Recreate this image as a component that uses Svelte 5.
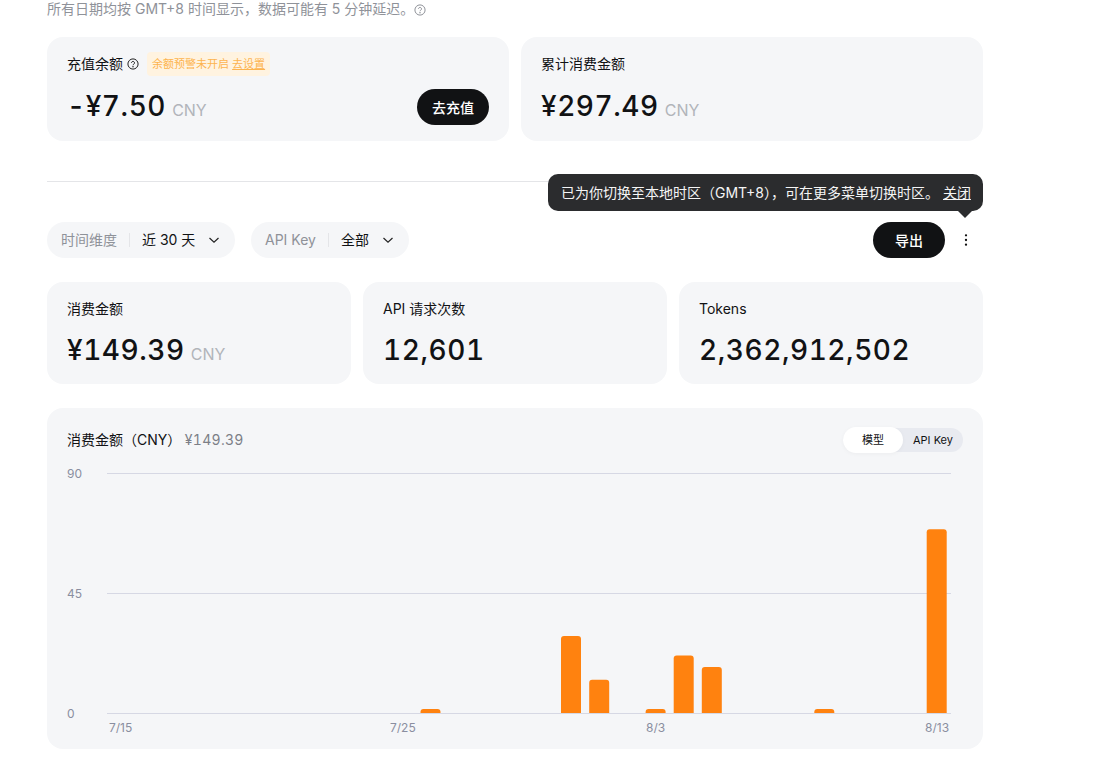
<script>
  const stats = [
    { label: '消费金额', value: '¥149.39', unit: 'CNY' },
    { label: 'API 请求次数', value: '12,601' },
    { label: 'Tokens', value: '2,362,912,502' }
  ];

  // svg origin is at the chart body's top left corner
  const ticks = [
    { label: '90', y: 10 },
    { label: '45', y: 130 },
    { label: '0', y: 250 }
  ];
  const dates = [
    { label: '7/15', x: 42 },
    { label: '7/25', x: 323 },
    { label: '8/3', x: 579 },
    { label: '8/13', x: 858 }
  ];
  const bars = [
    { x: 353.5, top: 246 },
    { x: 494, top: 173 },
    { x: 522.2, top: 216.7 },
    { x: 578.6, top: 246 },
    { x: 606.7, top: 192.5 },
    { x: 634.8, top: 204 },
    { x: 747.3, top: 246 },
    { x: 859.7, top: 66.3 }
  ];

  function barPath(x, top) {
    const r = 3;
    const bottom = 250;
    const h = Math.min(r, bottom - top);
    return `M${x} ${bottom}V${top + h}Q${x} ${top} ${x + r} ${top}H${x + 17}Q${x + 20} ${top} ${x + 20} ${top + h}V${bottom}Z`;
  }
</script>

<div class="page">
  <p class="note">
    所有日期均按 GMT+8 时间显示，数据可能有 5 分钟延迟。<svg class="help" viewBox="0 0 12 12" fill="none" stroke="currentColor">
      <circle cx="6" cy="6" r="5.1" />
      <path d="M4.5 4.9a1.5 1.5 0 1 1 2.3 1.25c-.5.3-.8.6-.8 1.1" />
      <circle cx="6" cy="8.8" r=".35" />
    </svg>
  </p>

  <div class="balance-row">
    <div class="card balance">
      <div class="label-row">
        <span class="label">充值余额</span>
        <svg class="help dark" viewBox="0 0 12 12" fill="none" stroke="currentColor">
          <circle cx="6" cy="6" r="5.1" />
          <path d="M4.5 4.9a1.5 1.5 0 1 1 2.3 1.25c-.5.3-.8.6-.8 1.1" />
          <circle cx="6" cy="8.8" r=".35" />
        </svg>
        <span class="chip">余额预警未开启 <u>去设置</u></span>
      </div>
      <div class="value-row">
        <div class="amount">-¥7.50 <span class="unit">CNY</span></div>
        <button class="pill-btn">去充值</button>
      </div>
    </div>
    <div class="card balance">
      <div class="label-row">
        <span class="label">累计消费金额</span>
      </div>
      <div class="value-row">
        <div class="amount">¥297.49 <span class="unit">CNY</span></div>
      </div>
    </div>
  </div>

  <hr class="divider" />

  <div class="toolbar">
    <div class="filter time">
      <span class="filter-label">时间维度</span>
      <span class="filter-value">近 30 天</span>
      <svg class="chevron" viewBox="0 0 12 12" fill="none" stroke="currentColor" stroke-width="1.2">
        <path d="M1.5 4l4.5 4.2L10.500 4" />
      </svg>
    </div>
    <div class="filter key">
      <span class="filter-label">API Key</span>
      <span class="filter-value">全部</span>
      <svg class="chevron" viewBox="0 0 12 12" fill="none" stroke="currentColor" stroke-width="1.2">
        <path d="M1.5 4l4.5 4.2L10.500 4" />
      </svg>
    </div>
    <div class="actions">
      <button class="pill-btn">导出</button>
      <button class="more" aria-label="更多">
        <svg viewBox="0 0 4 14" fill="#111">
          <circle cx="2" cy="2.300" r="1.150" />
          <circle cx="2" cy="7" r="1.150" />
          <circle cx="2" cy="11.700" r="1.150" />
        </svg>
      </button>
      <div class="tooltip">
        已为你切换至本地时区（GMT+8），可在更多菜单切换时区。 <u>关闭</u>
      </div>
    </div>
  </div>

  <div class="stats">
    {#each stats as stat}
      <div class="card stat">
        <div class="label">{stat.label}</div>
        <div class="amount">
          {stat.value}
          {#if stat.unit}<span class="unit">{stat.unit}</span>{/if}
        </div>
      </div>
    {/each}
  </div>

  <div class="card chart">
    <div class="chart-head">
      <div class="chart-title">
        <span class="label">消费金额（CNY）</span>
        <span class="total">¥149.39</span>
      </div>
      <div class="toggle">
        <span class="toggle-item active">模型</span>
        <span class="toggle-item">API Key</span>
      </div>
    </div>
    <svg class="plot" viewBox="0 0 896 270" width="896" height="270">
      {#each ticks as tick}
        <line x1="40" x2="884" y1={tick.y + 0.5} y2={tick.y + 0.5} stroke="#d6d8e4" />
        <text x="0" y={tick.y + 4.500} class="axis">{tick.label}</text>
      {/each}
      {#each bars as bar}
        <path d={barPath(bar.x, bar.top)} fill="#ff820f" />
      {/each}
      {#each dates as date}
        <text x={date.x} y="268.500" class="axis">{date.label}</text>
      {/each}
    </svg>
  </div>
</div>

<style>
  :global(body) {
    margin: 0;
    background: #fff;
  }

  .page {
    box-sizing: border-box;
    width: 1112px;
    height: 766px;
    overflow: hidden;
    padding: 0 129px 0 47px;
    font-family: Inter, "Noto Sans CJK SC", sans-serif;
    color: #111214;
  }

  .note {
    margin: 0 0 19px;
    height: 18px;
    line-height: 18px;
    font-size: 14px;
    color: #8f9299;
    white-space: nowrap;
  }

  .help {
    width: 12px;
    height: 12px;
    vertical-align: -1.5px;
  }

  .card {
    background: #f5f6f8;
    border-radius: 16px;
    box-sizing: border-box;
  }

  .balance-row {
    display: grid;
    grid-template-columns: 1fr 1fr;
    gap: 12px;
  }

  .balance {
    height: 104px;
    padding: 15px 20px;
  }

  .label-row {
    display: flex;
    align-items: center;
    height: 24px;
  }

  .label {
    font-size: 14px;
    line-height: 20px;
  }

  .help.dark {
    margin-left: 4px;
    color: #222;
  }

  .chip {
    margin-left: 8px;
    padding: 0 5px;
    height: 24px;
    line-height: 24px;
    border-radius: 4px;
    background: #fff3e0;
    color: #fdb44f;
    font-size: 11px;
    white-space: nowrap;
  }

  .value-row {
    display: flex;
    justify-content: space-between;
    align-items: center;
    margin-top: 13px;
    height: 36px;
  }

  .amount {
    font-size: 28px;
    line-height: 36px;
    font-weight: 500;
    font-variant-numeric: tabular-nums;
    letter-spacing: 0.02em;
    white-space: nowrap;
  }

  .value-row .amount {
    padding-top: 1px;
  }

  .unit {
    margin-left: -2px;
    font-size: 16px;
    font-weight: 400;
    letter-spacing: 0;
    color: #b1b4ba;
  }

  .pill-btn {
    width: 72px;
    height: 36px;
    border: none;
    border-radius: 18px;
    background: #111214;
    color: #fff;
    font: 500 14px Inter, "Noto Sans CJK SC", sans-serif;
  }

  .divider {
    margin: 40px 0;
    border: none;
    border-top: 1px solid #e4e5e8;
  }

  .toolbar {
    display: flex;
    align-items: center;
    gap: 16px;
    height: 36px;
  }

  .filter {
    display: flex;
    align-items: center;
    box-sizing: border-box;
    height: 36px;
    padding: 0 15px 0 14px;
    background: #f5f6f8;
    border-radius: 18px;
    font-size: 14px;
    white-space: nowrap;
  }

  .filter.time {
    width: 188px;
  }

  .filter.key {
    width: 158px;
  }

  .filter-label {
    color: #8f9299;
    padding-right: 12px;
    border-right: 1px solid #e4e5e8;
    line-height: 14px;
  }

  .filter-value {
    margin-left: 12px;
    padding-bottom: 2px;
  }

  .chevron {
    width: 12px;
    height: 12px;
    margin-left: auto;
    color: #222;
  }

  .actions {
    position: relative;
    margin-left: auto;
    display: flex;
    align-items: center;
    gap: 18px;
  }

  .more {
    width: 6px;
    height: 14px;
    padding: 0 1px;
    margin-right: 14px;
    border: none;
    background: none;
    display: block;
  }

  .more svg {
    display: block;
    width: 4px;
    height: 14px;
  }

  .tooltip {
    position: absolute;
    right: 0;
    bottom: 47px;
    height: 37px;
    line-height: 37px;
    padding: 0 13px;
    box-sizing: border-box;
    width: 435px;
    background: #2b2c2e;
    color: #f5f5f5;
    font-size: 14px;
    border-radius: 10px;
    white-space: nowrap;
  }

  .tooltip::after {
    content: '';
    position: absolute;
    right: 10px;
    bottom: -7px;
    width: 0;
    height: 0;
    border-left: 8px solid transparent;
    border-right: 8px solid transparent;
    border-top: 8px solid #2b2c2e;
  }

  .stats {
    display: grid;
    grid-template-columns: repeat(3, 1fr);
    gap: 12px;
    margin-top: 24px;
  }

  .stat {
    height: 102px;
    padding: 17px 20px;
  }

  .stat .amount {
    margin-top: 13px;
  }

  .chart {
    margin-top: 24px;
    height: 341px;
    padding: 20px;
  }

  .chart-head {
    display: flex;
    justify-content: space-between;
    align-items: center;
    height: 24px;
  }

  .chart-title {
    padding-bottom: 2px;
  }

  .total {
    margin-left: -1px;
    font-size: 14px;
    font-variant-numeric: tabular-nums;
    letter-spacing: 0.3px;
    color: #7c7f87;
  }

  .toggle {
    display: flex;
    align-items: center;
    width: 120px;
    height: 24px;
    border-radius: 12px;
    background: #e8eaf0;
    font-size: 11px;
  }

  .toggle-item {
    flex: 1;
    text-align: center;
    line-height: 26px;
  }

  .toggle-item.active {
    flex: 0 0 60px;
    height: 26px;
    border-radius: 13px;
    background: #fff;
    box-shadow: 0 1px 4px rgba(0, 0, 0, 0.04);
  }

  .plot {
    display: block;
    margin-top: 11px;
  }

  .axis {
    font-size: 12px;
    fill: #8a8ea0;
  }
</style>
